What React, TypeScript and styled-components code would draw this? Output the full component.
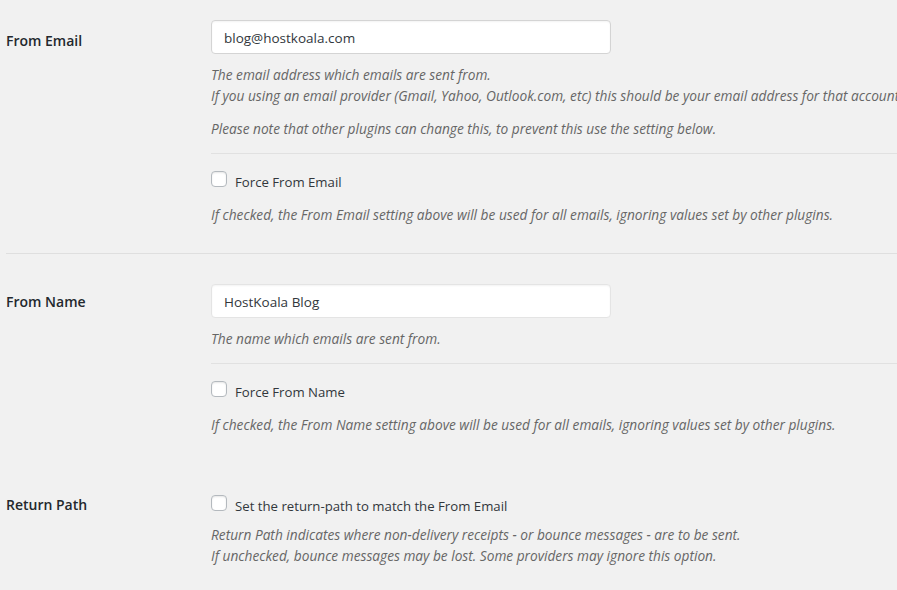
import React from 'react';
import styled, { createGlobalStyle } from 'styled-components';

const Global = createGlobalStyle`
  html, body { margin: 0; padding: 0; background: #f1f1f1; }
  body {
    font-family: "Segoe UI", "Open Sans", "Noto Sans", sans-serif;
    overflow: hidden;
  }
  * { box-sizing: border-box; }
`;

const Page = styled.div`
  width: 897px;
  height: 590px;
  overflow: hidden;
  background: #f1f1f1;
  padding-left: 6px;
`;

const Row = styled.div<{ $pt: number; $pb: number; $border?: boolean }>`
  display: grid;
  grid-template-columns: 205px 1fr;
  width: 1200px;
  padding-top: ${(p) => p.$pt}px;
  padding-bottom: ${(p) => p.$pb}px;
  border-bottom: ${(p) => (p.$border ? '1px solid #dfdfdf' : 'none')};
`;

const Label = styled.div<{ $mt: number }>`
  margin-top: ${(p) => p.$mt}px;
  font-size: 14px;
  line-height: 21px;
  font-weight: 600;
  color: #23282d;
`;

const Field = styled.div`
  display: flex;
  flex-direction: column;
  align-items: flex-start;
`;

const TextInput = styled.input<{ $strong?: boolean }>`
  width: 400px;
  height: 34px;
  padding: 1px 12px 0;
  border: 1px solid ${(p) => (p.$strong ? '#d4d4d4' : '#e4e4e4')};
  border-radius: 4px;
  background: #fff;
  box-shadow: inset 0 1px 2px rgba(0, 0, 0, 0.05);
  font-family: inherit;
  font-size: 13.5px;
  color: #32373c;
  outline: none;
`;

const Desc = styled.p<{ $mt: number }>`
  margin: ${(p) => p.$mt}px 0 0;
  font-size: 13.7px;
  line-height: 21px;
  font-style: italic;
  color: #666;
  white-space: nowrap;
`;

const Separator = styled.div`
  align-self: stretch;
  margin-top: 14px;
  height: 1px;
  background: #e1e1e1;
`;

const CheckRow = styled.label<{ $mt: number }>`
  display: flex;
  align-items: flex-start;
  gap: 8px;
  margin-top: ${(p) => p.$mt}px;
  font-size: 13.2px;
  line-height: 24px;
  color: #32373c;
`;

const Box = styled.input`
  appearance: none;
  -webkit-appearance: none;
  margin: 1px 0 0;
  width: 16px;
  height: 16px;
  border: 1px solid #b4b9be;
  border-radius: 4px;
  background: #fff;
  box-shadow: inset 0 1px 2px rgba(0, 0, 0, 0.1);
  flex: none;
`;

export default function App() {
  return (
    <>
      <Global />
      <Page>
        <Row $pt={20} $pb={28} $border>
          <Label $mt={10}>From Email</Label>
          <Field>
            <TextInput $strong type="email" defaultValue="blog@hostkoala.com" />
            <Desc $mt={10}>
              The email address which emails are sent from.
              <br />
              If you using an email provider (Gmail, Yahoo, Outlook.com, etc) this should be your email address for that account.
            </Desc>
            <Desc $mt={12}>Please note that other plugins can change this, to prevent this use the setting below.</Desc>
            <Separator />
            <CheckRow $mt={16}>
              <Box type="checkbox" />
              Force From Email
            </CheckRow>
            <Desc $mt={10}>
              If checked, the From Email setting above will be used for all emails, ignoring values set by other plugins.
            </Desc>
          </Field>
        </Row>
        <Row $pt={30} $pb={0}>
          <Label $mt={7}>From Name</Label>
          <Field>
            <TextInput type="text" defaultValue="HostKoala Blog" />
            <Desc $mt={10}>The name which emails are sent from.</Desc>
            <Separator />
            <CheckRow $mt={16}>
              <Box type="checkbox" />
              Force From Name
            </CheckRow>
            <Desc $mt={10}>
              If checked, the From Name setting above will be used for all emails, ignoring values set by other plugins.
            </Desc>
          </Field>
        </Row>
        <Row $pt={59} $pb={0}>
          <Label $mt={0}>Return Path</Label>
          <Field>
            <CheckRow $mt={0}>
              <Box type="checkbox" />
              Set the return-path to match the From Email
            </CheckRow>
            <Desc $mt={6}>
              Return Path indicates where non-delivery receipts - or bounce messages - are to be sent.
              <br />
              If unchecked, bounce messages may be lost. Some providers may ignore this option.
            </Desc>
          </Field>
        </Row>
      </Page>
    </>
  );
}
